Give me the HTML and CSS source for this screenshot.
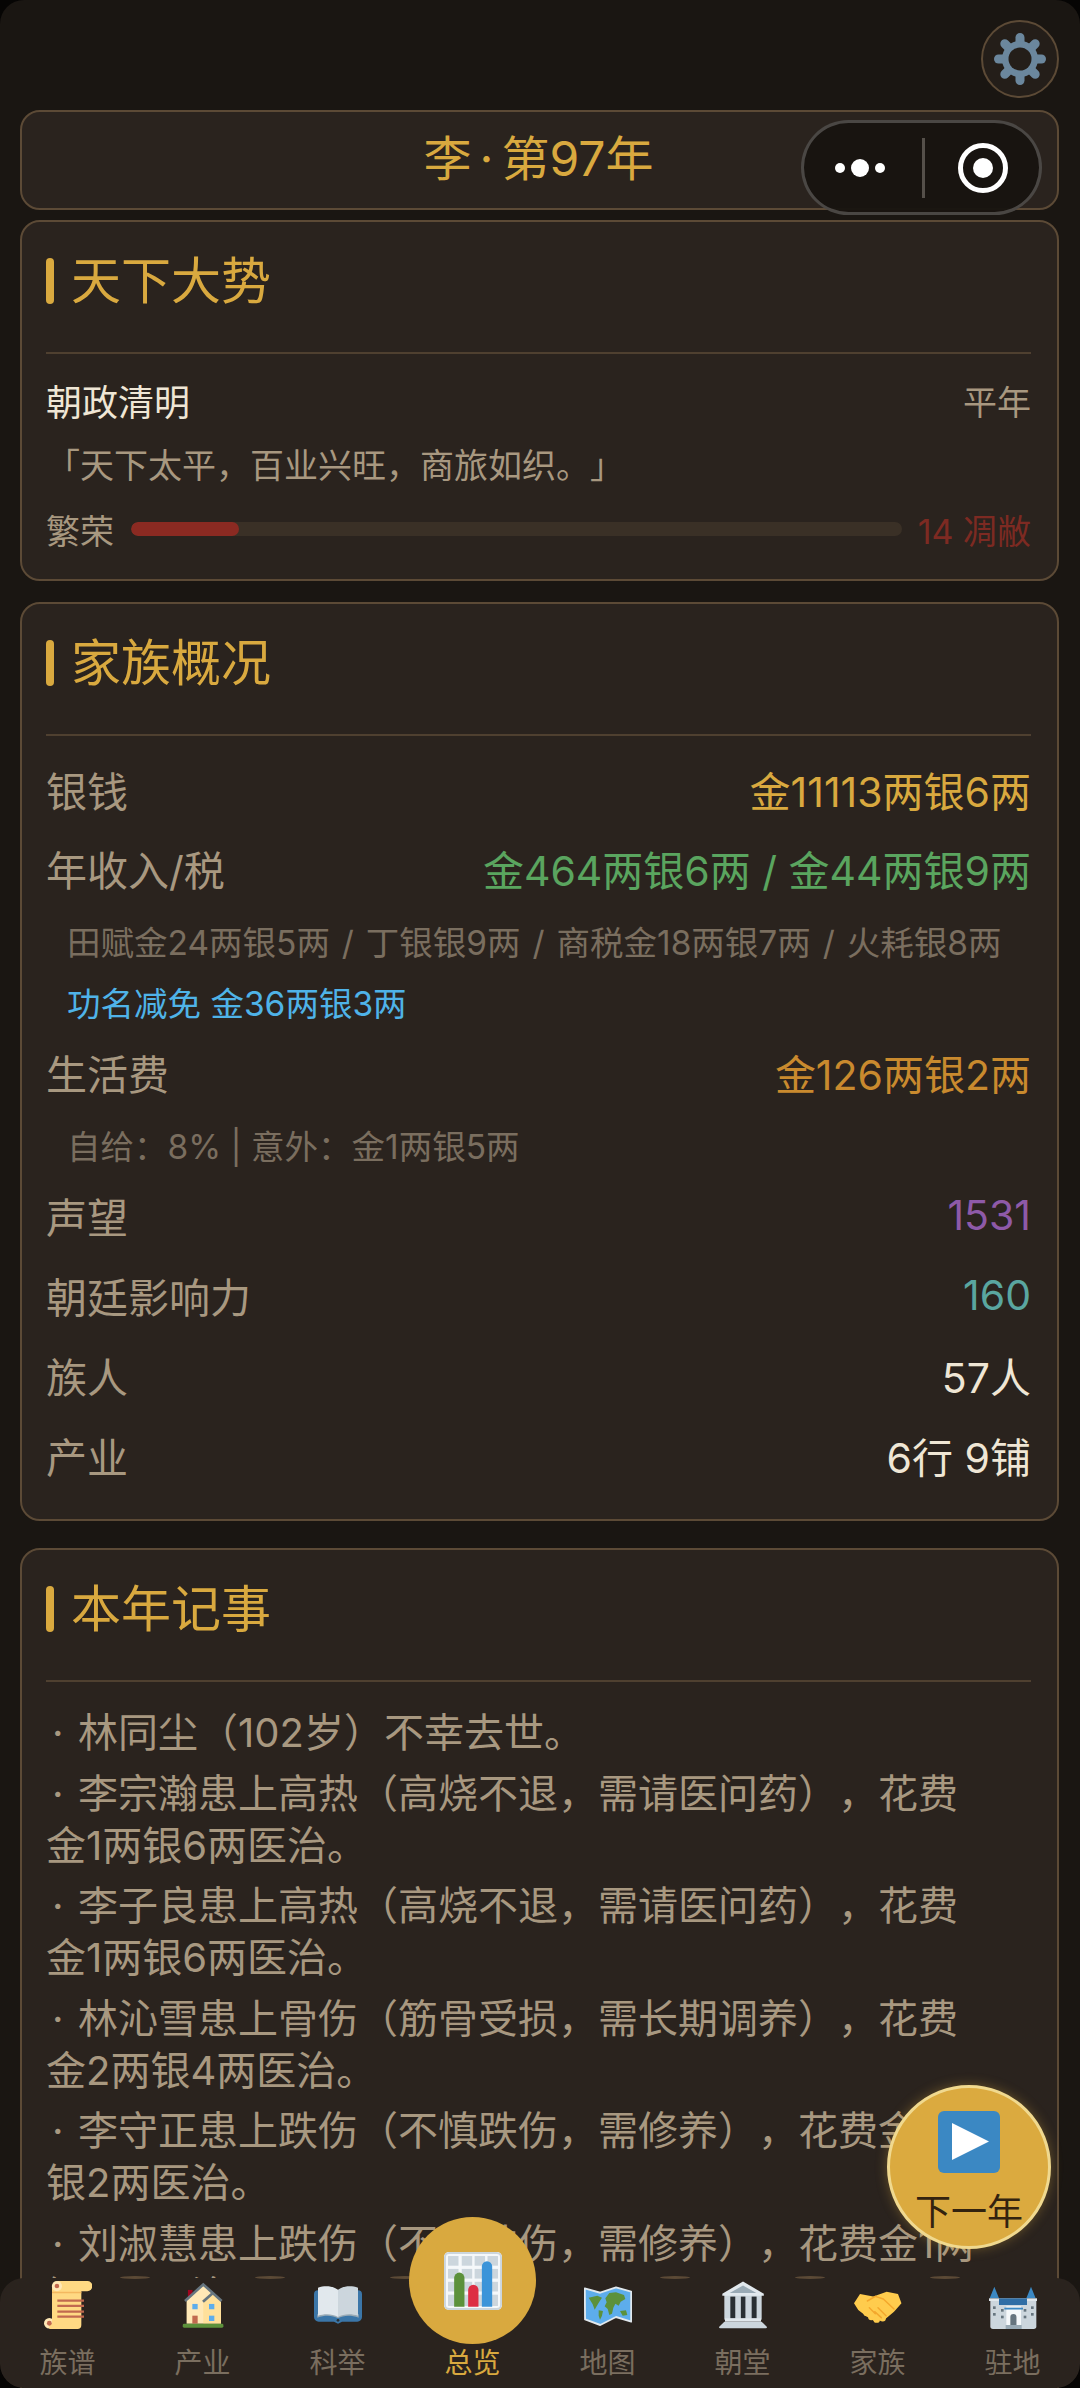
FILE: index.html
```html
<!DOCTYPE html>
<html lang="zh-CN">
<head>
<meta charset="utf-8">
<title>李·第97年</title>
<link rel="stylesheet" href="styles.css">
</head>
<body>
<div class="screen">
  <div class="toprow">
    <button class="gear-btn">
      <svg class="gear" viewBox="0 0 52 52">
        <g stroke="#6b879d" stroke-width="9" stroke-linecap="round">
          <line x1="26" y1="4.5" x2="26" y2="47.5"/>
          <line x1="4.5" y1="26" x2="47.5" y2="26"/>
          <line x1="10.8" y1="10.8" x2="41.2" y2="41.2"/>
          <line x1="41.2" y1="10.8" x2="10.8" y2="41.2"/>
        </g>
        <circle cx="26" cy="26" r="18" fill="#6b879d"/>
        <circle cx="26" cy="26" r="11.5" fill="#241e19"/>
      </svg>
    </button>
  </div>

  <div class="card title-card"><span class="game-title">李<span class="mid">·</span>第97年</span></div>

  <section class="card card-world">
    <div class="head"><i class="bar"></i><h2>天下大势</h2></div>
    <div class="world-top"><span class="world-name">朝政清明</span><span class="world-year">平年</span></div>
    <p class="quote">「天下太平，百业兴旺，商旅如织。」</p>
    <div class="prosper">
      <span class="prosper-label">繁荣</span>
      <div class="track"><div class="fill" style="width:14%"></div></div>
      <span class="prosper-val">14 凋敝</span>
    </div>
  </section>

  <section class="card card-family">
    <div class="head"><i class="bar"></i><h2>家族概况</h2></div>
    <div class="row first"><span>银钱</span><span class="gold">金11113两银6两</span></div>
    <div class="row tight"><span>年收入/税</span><span class="green">金464两银6两 / 金44两银9两</span></div>
    <div class="note sep">田赋金24两银5两 / 丁银银9两 / 商税金18两银7两 / 火耗银8两</div>
    <div class="note blue close">功名减免 金36两银3两</div>
    <div class="row after-note"><span>生活费</span><span class="orange">金126两银2两</span></div>
    <div class="note">自给：8% | 意外：金1两银5两</div>
    <div class="row after-note"><span>声望</span><span class="purple">1531</span></div>
    <div class="row"><span>朝廷影响力</span><span class="teal">160</span></div>
    <div class="row"><span>族人</span><span class="white">57人</span></div>
    <div class="row"><span>产业</span><span class="white">6行 9铺</span></div>
  </section>

  <section class="card card-log">
    <div class="head"><i class="bar"></i><h2>本年记事</h2></div>
    <div class="log">
      <p><span class="dot">·</span>林同尘（102岁）不幸去世。</p>
      <p><span class="dot">·</span>李宗瀚患上高热（高烧不退，需请医问药），花费<br>金1两银6两医治。</p>
      <p><span class="dot">·</span>李子良患上高热（高烧不退，需请医问药），花费<br>金1两银6两医治。</p>
      <p><span class="dot">·</span>林沁雪患上骨伤（筋骨受损，需长期调养），花费<br>金2两银4两医治。</p>
      <p><span class="dot">·</span>李守正患上跌伤（不慎跌伤，需修养），花费金1两<br>银2两医治。</p>
      <p><span class="dot">·</span>刘淑慧患上跌伤（不慎跌伤，需修养），花费金1两<br>银5两医治。</p>
    </div>
  </section>

  <div class="capsule">
    <svg class="cap-dots" viewBox="0 0 50 18"><circle cx="5" cy="9" r="5"/><circle cx="25" cy="9" r="9"/><circle cx="45" cy="9" r="5"/></svg>
    <i class="cap-line"></i>
    <svg class="cap-target" viewBox="0 0 50 50"><circle cx="25" cy="25" r="22.5" fill="none" stroke="#fff" stroke-width="5"/><circle cx="25" cy="25" r="10" fill="#fff"/></svg>
  </div>

  <button class="fab">
    <svg class="fab-icon" viewBox="0 0 62 62"><rect width="62" height="62" rx="6" fill="#3b88c3"/><path d="M14 12 L51 30.5 L14 49 Z" fill="#fff"/></svg>
    <span class="fab-text">下一年</span>
  </button>

  <nav class="tabs">
    <a class="tab">
      <svg class="ticon" viewBox="0 0 36 36">
        <circle cx="4" cy="31.7" r="4" fill="#ffe8b6"/>
        <path d="M6 4 H28 V33 a3 3 0 0 1 -3 3 H4 V32 H6 Z" fill="#ffd983"/>
        <path d="M6 8 H28 V9.2 H6 Z" fill="#f4b860"/>
        <path d="M10 0 H32.5 a3.7 3.7 0 0 1 0 7.6 H10 Z" fill="#ffd983"/>
        <circle cx="9.7" cy="3.8" r="3.8" fill="#ffe8b6"/>
        <circle cx="9.7" cy="3.8" r="1.7" fill="#c1694f"/>
        <circle cx="4" cy="31.7" r="1.8" fill="#c1694f"/>
        <path d="M10 14.7 H30 M10 18.6 H30 M10 22.9 H30 M10 26.8 H30" stroke="#c1694f" stroke-width="1.7"/>
      </svg>
      <span>族谱</span>
    </a>
    <a class="tab">
      <svg class="ticon" viewBox="0 0 36 36">
        <rect x="6.7" y="6.7" width="3.4" height="8" fill="#a0041e"/>
        <path d="M5.7 14 L18.2 3 L31.5 14 V32 H5.7 Z" fill="#ffe8b6"/>
        <path d="M18.2 14 L25 8.5 L31.5 14 V32 H18.2 Z" fill="#ffd983" opacity=".55"/>
        <path d="M4.5 15 L18.2 2.6 L32 15" fill="none" stroke="#66757f" stroke-width="2"/>
        <path d="M18 15.5 L25.4 9" fill="none" stroke="#66757f" stroke-width="2"/>
        <rect x="10" y="17.2" width="4" height="4" fill="#5dadec"/>
        <rect x="22.5" y="17.2" width="4" height="4" fill="#5dadec"/>
        <rect x="22.5" y="26" width="4" height="4" fill="#5dadec"/>
        <rect x="10" y="26" width="4" height="6" fill="#c1694f"/>
        <rect x="2.8" y="32" width="30.5" height="3" rx="1" fill="#5c913b"/>
      </svg>
      <span>产业</span>
    </a>
    <a class="tab">
      <svg class="ticon" viewBox="0 0 36 36">
        <path d="M3 7 H33 a3 3 0 0 1 3 3 V27 a3.5 3.5 0 0 1 -3.5 3.5 H21 L18 32 L15 30.5 H3.5 A3.5 3.5 0 0 1 0 27 V10 a3 3 0 0 1 3 -3 Z" fill="#3b76a8"/>
        <path d="M18 28 C14 25.5 8 25.5 2.5 27.5 L2.5 25 L18 24 L33.5 25 L33.5 27.5 C28 25.5 22 25.5 18 28 Z" fill="#99aab5"/>
        <path d="M18 6.5 C14 3.6 8 3.2 3 5 V26 C8 24.2 14 24.5 18 27 Z" fill="#e1e8ed"/>
        <path d="M18 6.5 C22 3.6 28 3.2 33 5 V26 C28 24.2 22 24.5 18 27 Z" fill="#ccd6dd"/>
        <circle cx="18" cy="29.5" r="1" fill="#292f33"/>
      </svg>
      <span>科举</span>
    </a>
    <a class="tab tab-active">
      <div class="disc">
        <svg class="chart" viewBox="0 0 36 36">
          <rect width="36" height="36" rx="3" fill="#f5f8fa"/>
          <rect x=".6" y=".6" width="34.8" height="34.8" rx="2.6" fill="none" stroke="#ccd6dd" stroke-width="1.2"/>
          <g fill="#ccd6dd">
            <rect x="2.5" y="2.5" width="6.5" height="6"/><rect x="11" y="2.5" width="6.5" height="6"/><rect x="19" y="2.5" width="6.5" height="6"/><rect x="27" y="2.5" width="6.5" height="6"/>
            <rect x="2.5" y="10.5" width="6.5" height="6"/><rect x="11" y="10.5" width="6.5" height="6"/><rect x="19" y="10.5" width="6.5" height="6"/><rect x="27" y="10.5" width="6.5" height="6"/>
            <rect x="2.5" y="18.5" width="6.5" height="6"/><rect x="11" y="18.5" width="6.5" height="6"/><rect x="19" y="18.5" width="6.5" height="6"/><rect x="27" y="18.5" width="6.5" height="6"/>
            <rect x="2.5" y="26.5" width="6.5" height="7"/><rect x="11" y="26.5" width="6.5" height="7"/><rect x="19" y="26.5" width="6.5" height="7"/><rect x="27" y="26.5" width="6.5" height="7"/>
          </g>
          <path d="M6.3 34 V16 a3.2 3.2 0 0 1 6.4 0 V34 Z" fill="#5c913b"/>
          <path d="M15 34 V23.5 a3.2 3.2 0 0 1 6.4 0 V34 Z" fill="#dd2e44"/>
          <path d="M23.5 34 V9 a3.2 3.2 0 0 1 6.4 0 V34 Z" fill="#3b94d9"/>
        </svg>
      </div>
      <span>总览</span>
    </a>
    <a class="tab">
      <svg class="ticon" viewBox="0 0 36 36">
        <path d="M.6 5.5 L12.2 8.8 L24 4.8 L35.4 8 V30.5 L24 27 L12.2 33 L.8 28.8 Z" fill="#5dadec" stroke="#e1e8ed" stroke-width="1.4" stroke-linejoin="round"/>
        <g fill="#5c913b">
          <path d="M3.5 12.5 L10 11 L13.5 12.5 L11.5 15.5 L9.5 19 L8 21.5 L6.5 17.5 Z"/>
          <path d="M11 22 L14.2 22.5 L13.5 26 L12 29 L11 26 Z"/>
          <path d="M16 13 L19 9 L24 8.5 L30 10.5 L31 13.5 L27.5 15.5 L26 18.5 L23.5 17 L22 20 L21 24.5 L19 25.5 L17.8 21 L15.5 19 L17 16 Z"/>
          <path d="M27 22.5 L31.5 22 L32.5 25.5 L29 26 Z"/>
        </g>
      </svg>
      <span>地图</span>
    </a>
    <a class="tab">
      <svg class="ticon" viewBox="0 0 36 36">
        <rect x="4" y="9" width="28" height="20" fill="#ccd6dd"/>
        <path d="M2.5 9.5 L18 .4 L33.6 9.5 V11 H2.5 Z" fill="#e1e8ed"/>
        <path d="M8 9 L18 3.4 L28 9 Z" fill="#99aab5"/>
        <rect x="8.5" y="11.7" width="3.7" height="16.3" fill="#292f33"/>
        <rect x="16.4" y="11.7" width="3.4" height="16.3" fill="#292f33"/>
        <rect x="24.5" y="11.7" width="3.7" height="16.3" fill="#292f33"/>
        <rect x="4.5" y="28" width="27" height="2.5" fill="#e1e8ed"/>
        <path d="M4 30.5 H32 L36 34.5 a1 1 0 0 1 -1 1 H1 a1 1 0 0 1 -1 -1 Z" fill="#ccd6dd"/>
      </svg>
      <span>朝堂</span>
    </a>
    <a class="tab">
      <svg class="ticon" viewBox="0 0 36 36">
        <path d="M0 16.7 L4.5 9.7 L14.5 11.7 L24.5 8 L33 9.7 L35.6 16.7 L30 23 L23.5 28.5 L16 30.5 L9.5 26.7 L3.2 21.7 Z" fill="#ffcc4d"/>
        <g fill="#ffcc4d">
          <circle cx="9.5" cy="24" r="2.4"/><circle cx="13" cy="27" r="2.4"/><circle cx="17" cy="29" r="2.4"/><circle cx="21.5" cy="28" r="2.4"/>
        </g>
        <path d="M10 15 L16 11.5 L22 13.5 L30 21 M18 20 L24 26 M15.5 23 L20.5 27.5 M11.5 20 L16 24.5" fill="none" stroke="#f4a72c" stroke-width="1.1" stroke-linecap="round" stroke-linejoin="round"/>
      </svg>
      <span>家族</span>
    </a>
    <a class="tab">
      <svg class="ticon" viewBox="0 0 36 36">
        <path d="M4 4.3 L7.5 13 H.5 Z M31.5 4.3 L35 13 H28 Z" fill="#3b88c3"/>
        <path d="M1 15 H35.5 V34 a2 2 0 0 1 -2 2 H3 a2 2 0 0 1 -2 -2 Z" fill="#ccd6dd"/>
        <rect x="0" y="13" width="36" height="2" fill="#e1e8ed"/>
        <rect x="7.5" y="13" width="21" height="5" fill="#2f6ea6"/>
        <path d="M13 19 H24 V33 H13 Z" fill="#f5f8fa"/>
        <path d="M11.5 20 H25.5 V21.4 H11.5 Z" fill="#3b88c3"/>
        <path d="M16 33 V27 a2.3 2.3 0 0 1 4.6 0 V33 Z" fill="#66757f"/>
        <rect x="12.500" y="33" width="12" height="3" fill="#99aab5"/>
        <g fill="#66757f">
          <rect x="3" y="19" width="2" height="2"/><rect x="3" y="24" width="2" height="2"/><rect x="9" y="21" width="2" height="2"/><rect x="9" y="26" width="2" height="2"/>
          <rect x="26" y="21" width="2" height="2"/><rect x="26" y="26" width="2" height="2"/><rect x="31.500" y="19" width="2" height="2"/><rect x="31.500" y="24" width="2" height="2"/>
        </g>
      </svg>
      <span>驻地</span>
    </a>
  </nav>
</div>
</body>
</html>
```
FILE: styles.css
```css
* { box-sizing: border-box; }
html, body { margin: 0; padding: 0; background: #060504; }
body {
  width: 1080px;
  height: 2388px;
  overflow: hidden;
  font-family: Inter, "Noto Sans CJK SC", sans-serif;
  text-spacing-trim: space-all;
}
h2, p { margin: 0; font-weight: 400; }

.screen {
  position: relative;
  width: 1080px;
  height: 2388px;
  overflow: hidden;
  padding: 20px 21px 0 20px;
  background: #1a1612;
  border-radius: 24px;
}

.toprow { display: flex; justify-content: flex-end; height: 90px; }
.gear-btn {
  width: 78px;
  height: 78px;
  padding: 0;
  display: flex;
  align-items: center;
  justify-content: center;
  background: #241e19;
  border: 2px solid #5c4a36;
  border-radius: 50%;
}
.gear { width: 52px; height: 52px; }

.card {
  background: #2a231e;
  border: 2px solid #5c4a36;
  border-radius: 20px;
  padding: 0 26px 0 24px;
}
.title-card {
  height: 100px;
  margin-bottom: 10px;
  display: flex;
  align-items: center;
  justify-content: center;
}
.game-title { font-size: 48px; color: #d9a93f; line-height: 1; margin-top: -2px; }
.mid { margin: 0 8px; }

.card-world { height: 361px; margin-bottom: 21px; }
.card-family { height: 919px; margin-bottom: 27px; }
.card-log { height: 900px; }

.head {
  display: flex;
  align-items: center;
  gap: 17px;
  height: 132px;
  padding: 37px 0 49px;
  border-bottom: 2px solid #4f4030;
}
.bar { width: 8px; height: 46px; border-radius: 4px; background: #d9a93f; }
.head h2 { font-size: 50px; line-height: 46px; color: #d9a93f; }

.world-top {
  display: flex;
  justify-content: space-between;
  align-items: center;
  margin-top: 22px;
  height: 48px;
}
.world-name { font-size: 36px; color: #efe6d5; }
.world-year { font-size: 34px; color: #a89880; }
.quote { margin-top: 20px; font-size: 34px; line-height: 44px; color: #a89880; }
.prosper { display: flex; align-items: center; margin-top: 21px; height: 40px; }
.prosper-label { font-size: 34px; color: #a89880; width: 85px; }
.track { width: 771px; height: 14px; border-radius: 7px; background: #3a3026; overflow: hidden; }
.fill { height: 100%; border-radius: 7px; background: #8b2a22; }
.prosper-val { margin-left: auto; font-size: 34px; color: #7d2a22; white-space: nowrap; }

.row {
  display: flex;
  justify-content: space-between;
  align-items: center;
  height: 56px;
  margin-top: 24px;
  font-size: 41px;
  color: #a89880;
}
.row.first { margin-top: 25px; }
.row.tight { margin-top: 23px; }
.row.after-note { margin-top: 18px; }
.note {
  height: 44px;
  margin-top: 25px;
  padding-left: 21px;
  font-size: 33.5px;
  line-height: 44px;
  color: #7a6e5f;
}
.note.sep { word-spacing: 2.5px; white-space: nowrap; }
.note.close { margin-top: 17px; }
.gold { color: #d9a93f; }
.green { color: #5aa55f; }
.orange { color: #c98a2e; }
.purple { color: #8e5aa8; }
.teal { color: #5aa6a0; }
.white { color: #efe6d5; }
.blue { color: #4fb3e8; }

.log { margin-top: 25px; display: flex; flex-direction: column; gap: 8.5px; }
.log p { font-size: 40px; line-height: 52px; color: #a89880; white-space: nowrap; }
.dot { display: inline-block; width: 32px; padding-left: 6px; }

.capsule {
  position: absolute;
  left: 801px;
  top: 120px;
  width: 241px;
  height: 95px;
  border: 3px solid rgba(255, 255, 255, .22);
  border-radius: 48px;
  background: rgba(24, 20, 16, .96);
}
.cap-dots { position: absolute; left: 31px; top: 36px; width: 50px; height: 18px; fill: #fff; }
.cap-line { position: absolute; left: 118px; top: 15px; width: 3px; height: 60px; background: #55504a; }
.cap-target { position: absolute; left: 154px; top: 20px; width: 50px; height: 50px; }

.fab {
  position: absolute;
  left: 887px;
  top: 2085px;
  width: 164px;
  height: 164px;
  padding: 23px 0 0;
  display: flex;
  flex-direction: column;
  align-items: center;
  background: #dbaa3f;
  border: 3px solid #f0d98f;
  border-radius: 50%;
  box-shadow: 0 0 12px rgba(219, 170, 63, .35);
}
.fab-icon { width: 62px; height: 62px; flex: none; }
.fab-text {
  margin-top: 18px;
  font-size: 36px;
  line-height: 44px;
  color: #33230f;
  font-family: inherit;
  white-space: nowrap;
}

.tabs {
  position: absolute;
  left: 0;
  top: 2278px;
  width: 1080px;
  height: 110px;
  display: flex;
  background: #2a231e;
  border-radius: 24px;
}
.tab {
  position: relative;
  flex: 1;
  display: flex;
  flex-direction: column;
  align-items: center;
  padding-top: 3px;
  font-size: 28px;
  line-height: 36px;
  color: #7a6e5f;
}
.tab::after {
  content: "";
  position: absolute;
  top: -2px;
  right: -15px;
  width: 30px;
  height: 3px;
  border-radius: 50%;
  background: #5c4a36;
}
.tab:nth-child(4)::after, .tab:last-child::after { display: none; }
.ticon { width: 48px; height: 48px; margin-bottom: 16px; display: block; }
.tab-active { color: #d9a93f; }
.tab-active > span { margin-top: 64px; position: relative; z-index: 1; }
.disc {
  position: absolute;
  left: 4px;
  top: -61px;
  width: 127px;
  height: 127px;
  border-radius: 50%;
  background: #d9a93f;
  display: flex;
  align-items: center;
  justify-content: center;
}
.chart { width: 58px; height: 58px; }
```
